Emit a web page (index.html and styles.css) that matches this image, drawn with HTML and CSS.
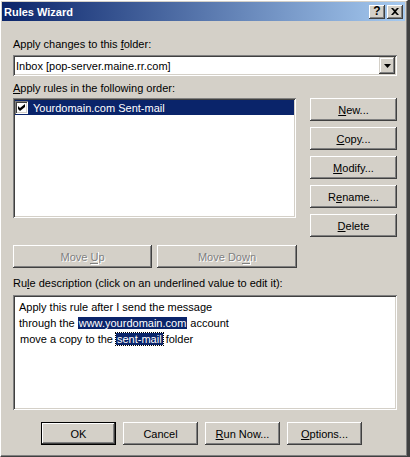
FILE: index.html
```html
<!DOCTYPE html>
<html>
<head>
<meta charset="utf-8">
<title>Rules Wizard</title>
<link rel="stylesheet" href="styles.css">
</head>
<body>
<div class="window">
  <div class="titlebar">
    <span class="title">Rules Wizard</span>
    <div class="tbtns">
      <div class="tbtn help">?</div>
      <div class="tbtn close">
        <svg width="8" height="7" viewBox="0 0 8 7"><path d="M0 0h2l2 2 2-2h2L5 3.5 8 7H6L4 5 2 7H0l3-3.5z" fill="#000"/></svg>
      </div>
    </div>
  </div>
  <div class="content">
    <div class="label lbl-folder">Apply changes to this <u>f</u>older:</div>
    <div class="combo">
      <span class="combo-text">Inbox [pop-server.maine.rr.com]</span>
      <span class="combo-btn"><svg width="7" height="4" viewBox="0 0 7 4"><path d="M0 0h7L3.5 4z" fill="#000"/></svg></span>
    </div>
    <div class="label lbl-rules"><u>A</u>pply rules in the following order:</div>
    <div class="rules-row">
      <div class="list">
        <div class="item sel">
          <span class="check"><svg width="7" height="7" viewBox="0 0 7 7"><path d="M0 2l2 2 5-4v3L2 7 0 5z" fill="#000"/></svg></span>
          <span>Yourdomain.com Sent-mail</span>
        </div>
      </div>
      <div class="side-btns">
        <div class="btn"><span><u>N</u>ew...</span></div>
        <div class="btn"><span><u>C</u>opy...</span></div>
        <div class="btn"><span><u>M</u>odify...</span></div>
        <div class="btn"><span>R<u>e</u>name...</span></div>
        <div class="btn"><span><u>D</u>elete</span></div>
      </div>
    </div>
    <div class="move-row">
      <div class="btn disabled move-up"><span>Move <u>U</u>p</span></div>
      <div class="btn disabled move-down"><span>Move Do<u>w</u>n</span></div>
    </div>
    <div class="label lbl-desc">Ru<u>l</u>e description (click on an underlined value to edit it):</div>
    <div class="desc">
      <div class="line">Apply this rule after I send the message</div>
      <div class="line">through the <span class="hl">www.yourdomain.com</span> account</div>
      <div class="line indent">move a copy to the <span class="hl focus">sent-mail</span> folder</div>
    </div>
    <div class="bottom-btns">
      <div class="btn wide default"><span>OK</span></div>
      <div class="btn wide"><span>Cancel</span></div>
      <div class="btn wide"><span><u>R</u>un Now...</span></div>
      <div class="btn wide"><span><u>O</u>ptions...</span></div>
    </div>
  </div>
</div>
</body>
</html>
```

FILE: styles.css
```css
html, body {
  margin: 0;
  padding: 0;
  background: #404040;
}

body {
  width: 410px;
  height: 457px;
  overflow: hidden;
  font-family: "Liberation Sans", Arial, sans-serif;
  font-size: 11px;
  color: #000;
}

.window {
  box-sizing: border-box;
  width: 408px;
  height: 457px;
  background: #d4d0c8;
  border: 1px solid;
  border-color: #fff #404040 #404040 #fff;
  box-shadow: inset -1px -1px #808080;
  padding: 1px 2px 2px 1px;
  display: flex;
  flex-direction: column;
}

.titlebar {
  height: 19px;
  flex: none;
  background: linear-gradient(to right, #0a246a, #a6caf0);
  display: flex;
  align-items: center;
  justify-content: space-between;
  padding: 0 2px;
}

.title {
  color: #fff;
  font-weight: bold;
  font-size: 11px;
  white-space: nowrap;
}

.tbtns {
  display: flex;
  gap: 2px;
}

.tbtn {
  box-sizing: border-box;
  width: 16px;
  height: 14px;
  background: #d4d0c8;
  box-shadow: inset -1px -1px #404040, inset 1px 1px #fff, inset -2px -2px #808080, inset 2px 2px #d4d0c8;
  display: flex;
  align-items: center;
  justify-content: center;
}

.tbtn.help {
  font-weight: bold;
  font-size: 12px;
  line-height: 14px;
  padding-bottom: 1px;
}

.tbtn.close svg {
  display: block;
  margin-bottom: 1px;
}

.content {
  flex: 1;
  display: flex;
  flex-direction: column;
  padding: 17px 8px 0 11px;
}

.label {
  height: 13px;
  line-height: 13px;
  white-space: nowrap;
}

.lbl-folder {
  margin-bottom: 4px;
}

.lbl-rules {
  margin-top: 6px;
  margin-bottom: 3px;
}

.lbl-desc {
  margin-top: 9px;
  margin-bottom: 5px;
}

.sunken {
  box-shadow: inset 1px 1px #808080, inset -1px -1px #fff, inset 2px 2px #404040, inset -2px -2px #d4d0c8;
}

.combo {
  box-sizing: border-box;
  height: 21px;
  background: #fff;
  box-shadow: inset 1px 1px #808080, inset -1px -1px #fff, inset 2px 2px #404040, inset -2px -2px #d4d0c8;
  display: flex;
  align-items: center;
  padding: 2px;
}

.combo-text {
  flex: 1;
  padding-left: 1px;
  white-space: nowrap;
}

.combo-btn {
  box-sizing: border-box;
  width: 16px;
  height: 17px;
  background: #d4d0c8;
  box-shadow: inset -1px -1px #404040, inset 1px 1px #d4d0c8, inset -2px -2px #808080, inset 2px 2px #fff;
  display: flex;
  align-items: center;
  justify-content: center;
}

.combo-btn svg {
  display: block;
}

.rules-row {
  display: flex;
  gap: 14px;
  align-items: flex-start;
}

.list {
  box-sizing: border-box;
  width: 283px;
  height: 120px;
  background: #fff;
  box-shadow: inset 1px 1px #808080, inset -1px -1px #fff, inset 2px 2px #404040, inset -2px -2px #d4d0c8;
  padding: 2px;
}

.item {
  height: 15px;
  display: flex;
  align-items: center;
  white-space: nowrap;
}

.item.sel {
  background: #0a246a;
  color: #fff;
}

.check {
  box-sizing: border-box;
  width: 13px;
  height: 13px;
  margin-right: 5px;
  background: #fff;
  box-shadow: inset 1px 1px #808080, inset -1px -1px #fff, inset 2px 2px #404040, inset -2px -2px #d4d0c8;
  display: flex;
  align-items: center;
  justify-content: center;
}

.check svg {
  display: block;
}

.side-btns {
  width: 87px;
  display: flex;
  flex-direction: column;
  gap: 6px;
}

.btn {
  box-sizing: border-box;
  height: 23px;
  background: #d4d0c8;
  box-shadow: inset -1px -1px #404040, inset 1px 1px #fff, inset -2px -2px #808080, inset 2px 2px #d4d0c8;
  display: flex;
  align-items: center;
  justify-content: center;
  white-space: nowrap;
}

.btn.disabled {
  color: #808080;
  text-shadow: 1px 1px 0 #fff;
}

.btn.disabled u {
  text-decoration: none;
  border-bottom: 1px solid #808080;
  box-shadow: 1px 1px 0 #fff;
}

.move-row {
  margin-top: 8px;
  display: flex;
  gap: 5px;
}

.move-up {
  width: 139px;
}

.move-down {
  width: 140px;
}

.desc {
  box-sizing: border-box;
  height: 115px;
  background: #fff;
  box-shadow: inset 1px 1px #808080, inset -1px -1px #fff, inset 2px 2px #404040, inset -2px -2px #d4d0c8;
  padding: 4px 6px;
}

.line {
  height: 16px;
  line-height: 16px;
  white-space: nowrap;
}

.line.indent {
  padding-left: 1px;
}

.hl {
  background: #0a246a;
  color: #fff;
  padding: 0 1px;
}

.hl.focus {
  outline: 1px dotted #000;
}

.bottom-btns {
  margin-top: 12px;
  padding-left: 28px;
  display: flex;
  gap: 7px;
}

.btn.wide {
  width: 75px;
}

.btn.default {
  box-shadow: inset 0 0 0 1px #000, inset -2px -2px #404040, inset 2px 2px #fff, inset -3px -3px #808080, inset 3px 3px #d4d0c8;
}
```
